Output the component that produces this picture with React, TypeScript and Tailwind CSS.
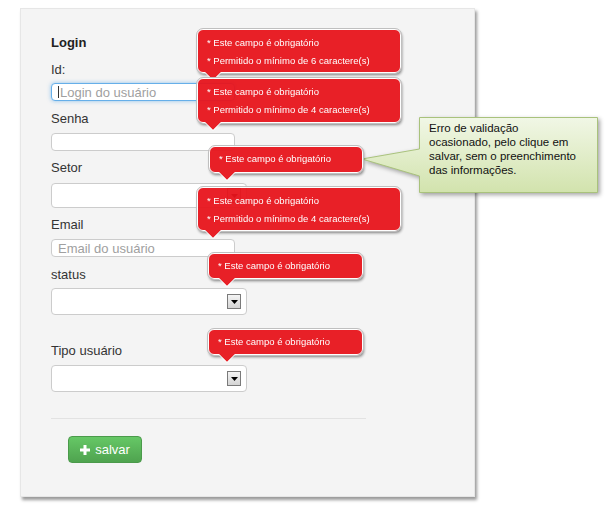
import React from 'react';

type TipProps = {
    top: number;
    left: number;
    width: number;
    height: number;
    arrow: number;
    lines: string[];
};

const Tip = ({ top, left, width, height, arrow, lines }: TipProps) => (
    <div
        className="absolute opacity-95"
        style={{ top, left, width, height }}
    >
        <div className="h-full rounded-[6px] border border-white bg-[#e8151d] pl-[9px] shadow-[1px_2px_3px_rgba(0,0,0,0.5)] outline outline-1 outline-[#bdbdbd]">
            <div className={lines.length > 1 ? 'pt-[4px]' : 'pt-[3px]'}>
                {lines.map((l) => (
                    <div key={l} className="text-[9.5px] leading-[18px] text-white whitespace-nowrap">
                        {l}
                    </div>
                ))}
            </div>
        </div>
        <svg className="absolute" style={{ left: arrow, top: height - 1 }} width="18" height="10" viewBox="0 0 18 10">
            <polygon points="1,0 9,8 17,0" fill="#e8151d" />
            <polyline points="1,0.5 9,8.5 17,0.5" fill="none" stroke="#ffffff" strokeWidth="1" />
        </svg>
    </div>
);

const Label = ({ children, className = '' }: { children: React.ReactNode; className?: string }) => (
    <div className={`text-[13px] leading-[20px] text-[#333] ${className}`}>{children}</div>
);

const TextInput = ({ placeholder, focus, className = '' }: { placeholder?: string; focus?: boolean; className?: string }) => (
    <div
        className={`flex h-[18px] w-[184px] items-center rounded-[4px] bg-white pl-[6px] ${
            focus ? 'border border-[#66afe9] shadow-[0_0_4px_rgba(102,175,233,0.7)]' : 'border border-[#cccccc]'
        } ${className}`}
    >
        {focus && <span className="mr-[1px] h-[12px] w-px bg-[#333]" />}
        {placeholder && <span className="text-[13px] leading-none text-[#a0a0a0]">{placeholder}</span>}
    </div>
);

const Select = ({ h, className = '' }: { h: string; className?: string }) => (
    <div className={`flex w-[196px] items-center justify-end rounded-[4px] border border-[#cccccc] bg-white pr-[5px] ${h} ${className}`}>
        <div className="flex h-[15px] w-[14px] items-center justify-center border border-[#7a7a7a] bg-gradient-to-b from-[#f4f4f4] to-[#d4d4d4]">
            <svg width="7" height="4" viewBox="0 0 7 4">
                <polygon points="0,0 7,0 3.5,4" fill="#000" />
            </svg>
        </div>
    </div>
);

export default function App() {
    return (
        <div className="relative h-[520px] w-[607px] overflow-hidden bg-white pl-[20px] pt-[8px] font-['Liberation_Sans',Arial,sans-serif]">
            <div className="h-[489px] w-[455px] border border-[#e6e6e6] bg-[#f4f4f4] pl-[30px] pt-[26px] shadow-[2px_3px_3px_rgba(0,0,0,0.4)]">
                <div className="text-[13px] font-bold leading-[16px] text-[#222]">Login</div>
                <Label className="mt-[9px]">Id:</Label>
                <TextInput className="mt-[3px]" placeholder="Login do usuário" focus />
                <Label className="mt-[8px]">Senha</Label>
                <TextInput className="mt-[4px]" />
                <Label className="mt-[7px]">Setor</Label>
                <Select h="h-[25px]" className="mt-[5px]" />
                <Label className="mt-[7px]">Email</Label>
                <TextInput className="mt-[4px]" placeholder="Email do usuário" />
                <Label className="mt-[8px]">status</Label>
                <Select h="h-[27px]" className="mt-[3px]" />
                <Label className="mt-[26px]">Tipo usuário</Label>
                <Select h="h-[27px]" className="mt-[4px]" />
                <div className="mt-[26px] h-px w-[315px] bg-[#e2e2e2]" />
                <button className="ml-[17px] mt-[17px] flex h-[27px] w-[74px] items-center justify-center gap-[5px] rounded-[4px] border border-[#4b9a4b] bg-gradient-to-b from-[#66c866] to-[#4fa34f] text-[13px] text-white">
                    <svg width="10" height="10" viewBox="0 0 10 10">
                        <rect x="3.5" y="0" width="3" height="10" fill="#fff" />
                        <rect x="0" y="3.5" width="10" height="3" fill="#fff" />
                    </svg>
                    <span>salvar</span>
                </button>
            </div>

            {/* callout */}
            <svg className="absolute left-0 top-0 drop-shadow-[2px_2px_2px_rgba(0,0,0,0.35)]" width="607" height="520">
                <defs>
                    <linearGradient id="cg" x1="0" y1="0" x2="0" y2="1">
                        <stop offset="0" stopColor="#f1f7e6" />
                        <stop offset="1" stopColor="#d2e3ad" />
                    </linearGradient>
                </defs>
                <path
                    d="M419.5 117.5 H597.5 V192.5 H419.5 V176 L362 159 L419.5 149 Z"
                    fill="url(#cg)"
                    stroke="#a9c27c"
                    strokeWidth="1"
                />
            </svg>
            <div className="absolute left-[429px] top-[121px] whitespace-nowrap text-[11.5px] leading-[14px] text-[#111]">
                Erro de validação
                <br />
                ocasionado, pelo clique em
                <br />
                salvar, sem o preenchimento
                <br />
                das informações.
            </div>

            <Tip top={29} left={197} width={204} height={44} arrow={7} lines={['* Este campo é obrigatório', '* Permitido o mínimo de 6 caractere(s)']} />
            <Tip top={78} left={197} width={204} height={45} arrow={7} lines={['* Este campo é obrigatório', '* Permitido o mínimo de 4 caractere(s)']} />
            <Tip top={146} left={209} width={154} height={27} arrow={9} lines={['* Este campo é obrigatório']} />
            <Tip top={187} left={197} width={204} height={44} arrow={7} lines={['* Este campo é obrigatório', '* Permitido o mínimo de 4 caractere(s)']} />
            <Tip top={253} left={208} width={155} height={26} arrow={10} lines={['* Este campo é obrigatório']} />
            <Tip top={329} left={208} width={155} height={26} arrow={10} lines={['* Este campo é obrigatório']} />
        </div>
    );
}
